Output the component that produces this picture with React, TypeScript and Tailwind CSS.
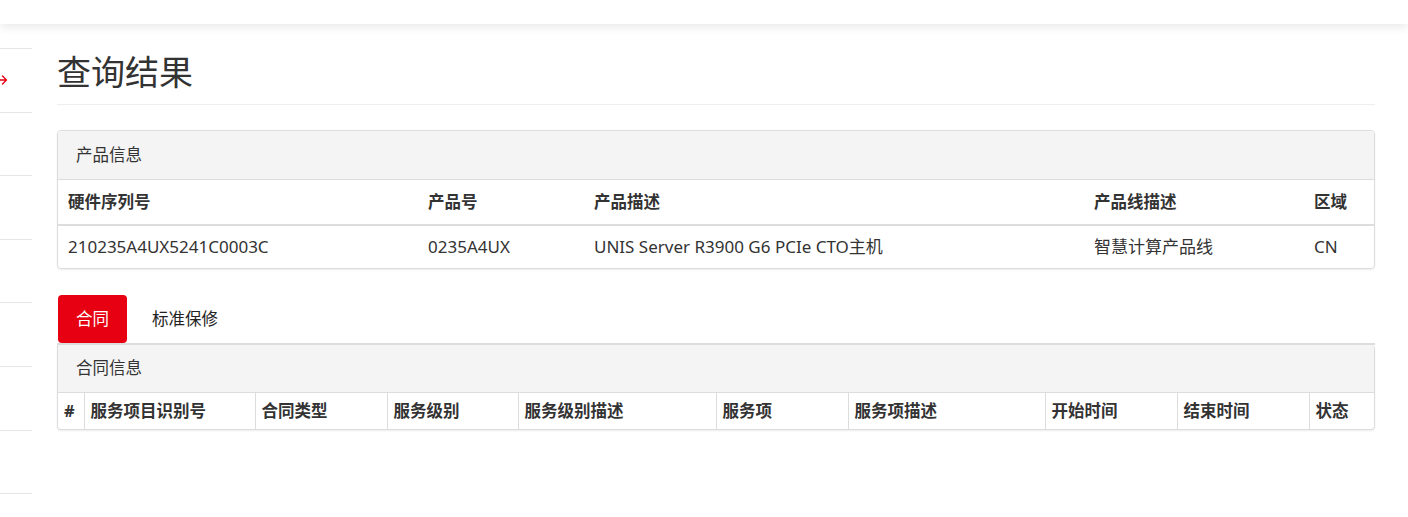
const FONT = "font-['Noto_Sans','Noto_Sans_CJK_SC',sans-serif]";

const productCols = [
  { title: "硬件序列号", width: 360, value: "210235A4UX5241C0003C" },
  { title: "产品号", width: 166, value: "0235A4UX" },
  { title: "产品描述", width: 500, value: "UNIS Server R3900 G6 PCIe CTO主机" },
  { title: "产品线描述", width: 220, value: "智慧计算产品线" },
  { title: "区域", width: 72, value: "CN" },
];

const contractCols = [
  { title: "#", width: 26 },
  { title: "服务项目识别号", width: 171 },
  { title: "合同类型", width: 132 },
  { title: "服务级别", width: 131 },
  { title: "服务级别描述", width: 198 },
  { title: "服务项", width: 132 },
  { title: "服务项描述", width: 197 },
  { title: "开始时间", width: 132 },
  { title: "结束时间", width: 132 },
  { title: "状态", width: 67 },
];

function Sidebar() {
  return (
    <div className="w-8 shrink-0 pt-6">
      {Array.from({ length: 7 }).map((_, i) => (
        <div
          key={i}
          className="flex h-[63.6px] items-center border-t border-[#e6e6e6]"
        >
          {i === 0 && (
            <svg width="11" height="12" viewBox="0 0 11 12" className="-ml-[3px]">
              <path
                d="M0.5 6h9M5.5 2 9.5 6 5.5 10"
                stroke="#e60012"
                strokeWidth="1.4"
                fill="none"
                strokeLinecap="round"
                strokeLinejoin="round"
              />
            </svg>
          )}
        </div>
      ))}
      <div className="border-t border-[#e6e6e6]" />
    </div>
  );
}

function ProductPanel() {
  return (
    <div className="mt-[25px] overflow-hidden rounded-[4px] border border-[#dddddd] shadow-[0_1px_2px_rgba(0,0,0,0.08)]">
      <div className="flex h-[49px] items-center border-b border-[#dddddd] bg-[#f4f4f4] px-[18px] text-[16.5px] text-[#333]">
        产品信息
      </div>
      <table className="w-full table-fixed border-collapse text-[16.5px] text-[#333]">
        <colgroup>
          {productCols.map((c) => (
            <col key={c.title} style={{ width: c.width }} />
          ))}
        </colgroup>
        <thead>
          <tr className="h-[45px] border-b-2 border-[#dddddd]">
            {productCols.map((c) => (
              <th key={c.title} className="px-[10px] text-left font-bold">
                {c.title}
              </th>
            ))}
          </tr>
        </thead>
        <tbody>
          <tr className="h-[43px]">
            {productCols.map((c) => (
              <td key={c.title} className="px-[10px] text-[17px] whitespace-nowrap">
                {c.value}
              </td>
            ))}
          </tr>
        </tbody>
      </table>
    </div>
  );
}

function Tabs() {
  return (
    <div className="mt-[26px] flex h-[50px] border-b-2 border-[#dddddd] text-[16.5px]">
      <div className="ml-px flex h-[48px] items-center rounded-[4px] bg-[#e60012] px-[18px] text-white">
        合同
      </div>
      <div className="ml-[7px] flex h-[48px] items-center px-[18px] text-[#222]">
        标准保修
      </div>
    </div>
  );
}

function ContractPanel() {
  return (
    <div className="overflow-hidden rounded-b-[4px] rounded-tr-[4px] border border-t-0 border-[#dddddd] shadow-[0_1px_2px_rgba(0,0,0,0.08)]">
      <div className="flex h-[48px] items-center border-b border-[#dddddd] bg-[#f4f4f4] px-[18px] text-[16.5px] text-[#333]">
        合同信息
      </div>
      <table className="w-full table-fixed border-collapse text-[16.5px] text-[#333]">
        <colgroup>
          {contractCols.map((c) => (
            <col key={c.title} style={{ width: c.width }} />
          ))}
        </colgroup>
        <thead>
          <tr className="h-[36px]">
            {contractCols.map((c, i) => (
              <th
                key={c.title}
                className={
                  "px-[6px] text-left font-bold whitespace-nowrap " +
                  (i > 0 ? "border-l border-[#dddddd]" : "")
                }
              >
                {c.title}
              </th>
            ))}
          </tr>
        </thead>
      </table>
    </div>
  );
}

export default function App() {
  return (
    <div className={"min-h-[517px] bg-white " + FONT}>
      <div className="relative z-10 h-6 bg-white shadow-[0_3px_10px_rgba(0,0,0,0.09)]" />
      <div className="flex">
        <Sidebar />
        <div className="min-w-0 flex-1 pl-[25px] pr-[33px] pt-[26px]">
          <h1 className="border-b border-[#eeeeee] pb-[10px] text-[34px] leading-[44px] font-normal text-[#333]">
            查询结果
          </h1>
          <ProductPanel />
          <Tabs />
          <ContractPanel />
        </div>
      </div>
    </div>
  );
}
